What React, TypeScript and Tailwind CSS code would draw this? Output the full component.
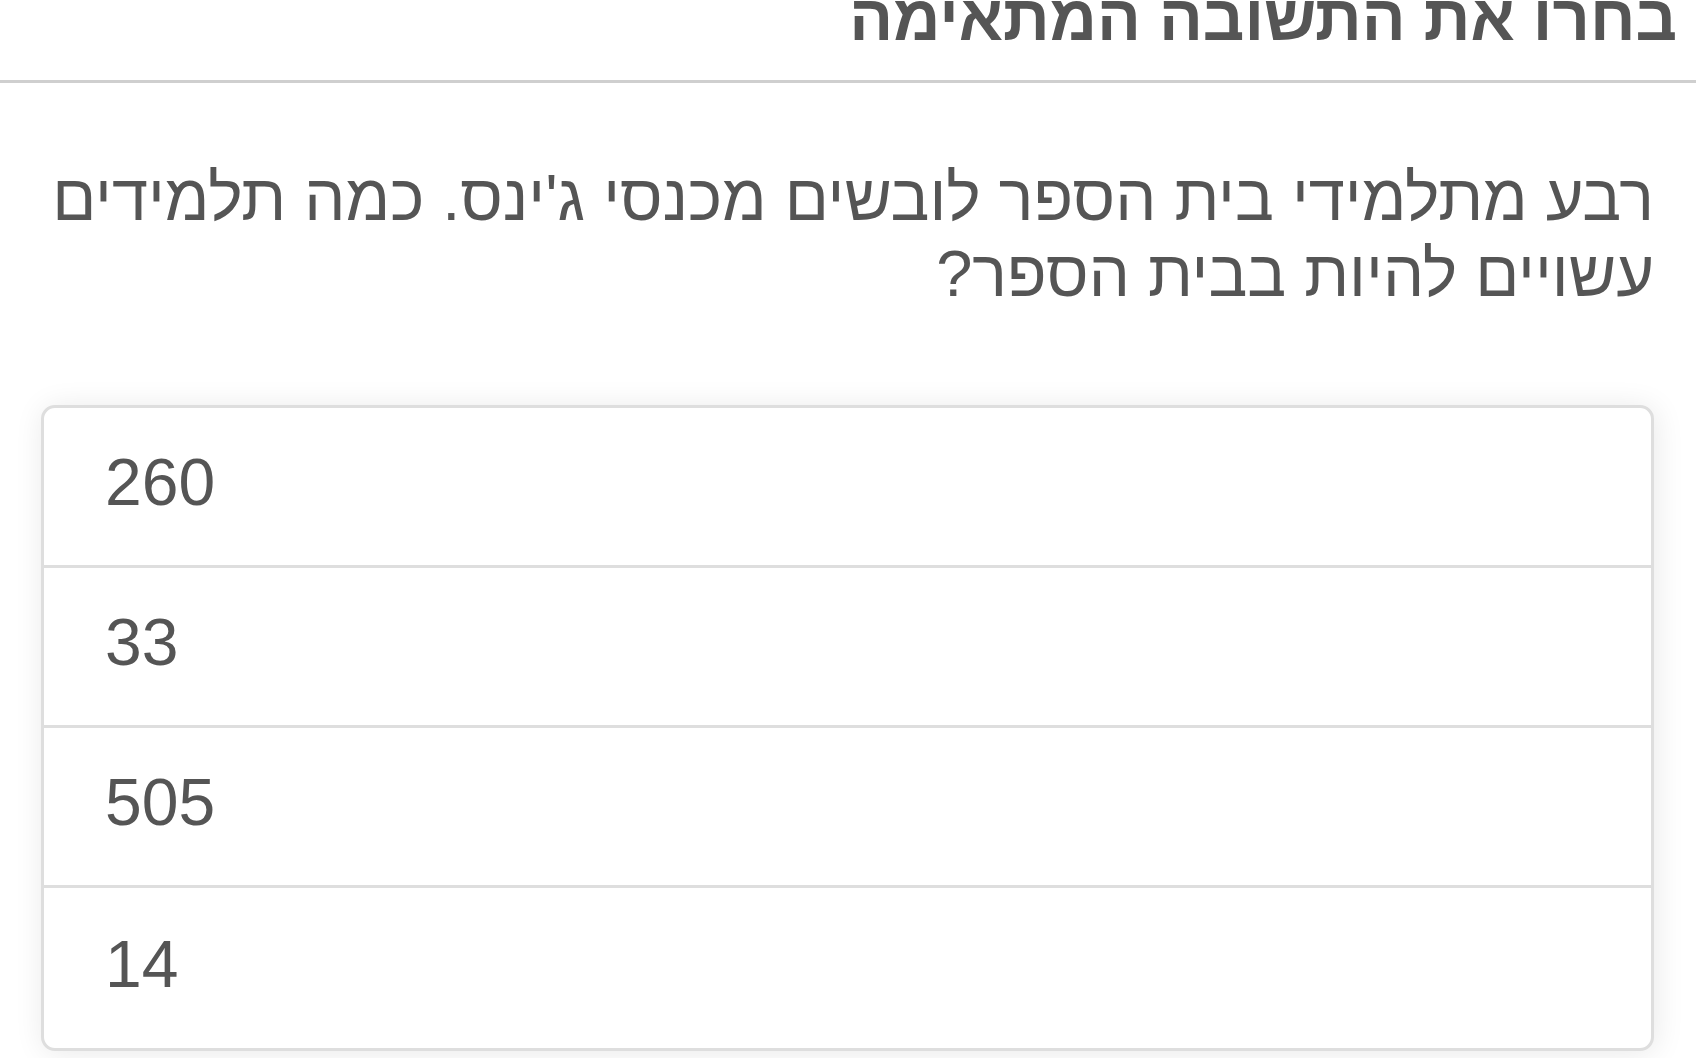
import React from "react";

const ANSWERS = ["260", "33", "505", "14"];

export default function App(): React.ReactElement {
  return (
    <div
      dir="rtl"
      className="min-h-screen bg-white text-[#555] overflow-hidden"
      style={{ fontFamily: '"Liberation Sans", Arial, sans-serif' }}
    >
      {/* flow-root keeps the heading's negative margin from pulling the bar up */}
      <div className="flow-root h-[83px] border-b-[3px] border-[#cfcfcf] pr-[19px]">
        <h1 className="-mt-[15px] text-[65px] font-bold leading-none whitespace-nowrap">בחרו את התשובה המתאימה</h1>
      </div>

      <div className="pl-[41px] pr-[42px]">
        <p className="mt-[77px] text-[65px] leading-[76px]">
          רבע מתלמידי בית הספר לובשים מכנסי ג'ינס. כמה תלמידים עשויים להיות בבית הספר?
        </p>

        <ul className="mt-[93px] rounded-[14px] border-[3px] border-[#dedede] bg-white shadow-[2px_2px_30px_rgba(0,0,0,0.09)] overflow-hidden">
          {ANSWERS.map((answer, i) => (
            <li
              key={answer}
              dir="ltr"
              className={
                "h-[160px] flex items-center pl-[61px] pb-[8px] text-[66px] " +
                (i < ANSWERS.length - 1 ? "border-b-[3px] border-[#dedede]" : "")
              }
            >
              {answer}
            </li>
          ))}
        </ul>
      </div>
    </div>
  );
}
